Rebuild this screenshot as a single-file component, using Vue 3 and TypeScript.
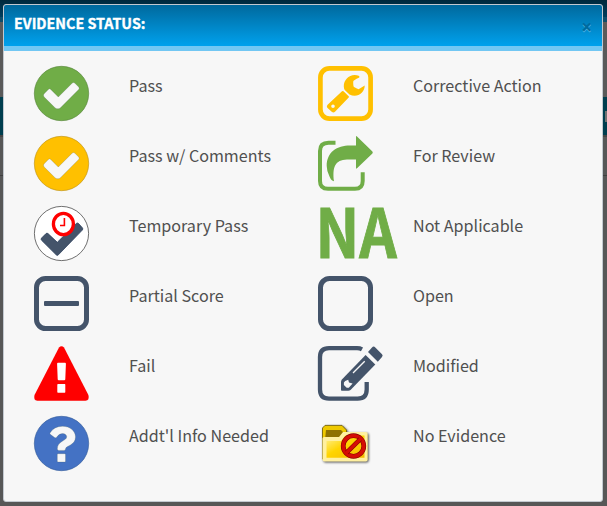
<script setup lang="ts">
interface StatusItem {
  icon: string
  label: string
}

const statuses: StatusItem[] = [
  { icon: 'pass', label: 'Pass' },
  { icon: 'wrench', label: 'Corrective Action' },
  { icon: 'comments', label: 'Pass w/ Comments' },
  { icon: 'review', label: 'For Review' },
  { icon: 'temporary', label: 'Temporary Pass' },
  { icon: 'na', label: 'Not Applicable' },
  { icon: 'partial', label: 'Partial Score' },
  { icon: 'open', label: 'Open' },
  { icon: 'fail', label: 'Fail' },
  { icon: 'modified', label: 'Modified' },
  { icon: 'info', label: "Addt'l Info Needed" },
  { icon: 'none', label: 'No Evidence' },
]
</script>

<template>
  <div class="screen">
    <div class="page">
      <div class="page-top"></div>
      <div class="page-edge"></div>
      <div class="page-space"></div>
      <div class="page-band"><span class="page-field"></span></div>
      <div class="page-row"></div>
    </div>
    <section class="dialog">
      <header class="head">
        <h1>EVIDENCE STATUS:</h1>
        <button class="close" type="button">×</button>
      </header>
      <div class="grid">
        <div v-for="item in statuses" :key="item.icon" class="item">
          <svg class="icon" viewBox="0 0 55 55">
            <g v-if="item.icon === 'pass' || item.icon === 'comments'">
              <circle cx="27.5" cy="27.5" r="27.2" :class="item.icon" />
              <path class="check" d="M10.2 27.7L14.6 23.2Q15.5 22.3 16.5 23.2L24.3 31L38.3 17Q39.5 15.9 40.7 17L44.7 21Q45.8 22.2 44.7 23.4L26.5 41.7Q25.5 42.7 24.3 42.7H23Q22 42.7 21 41.7L10.2 31Q9.5 30.2 9.5 29.3Q9.5 28.4 10.2 27.7Z" />
            </g>
            <g v-else-if="item.icon === 'temporary'">
              <circle cx="27.5" cy="27.5" r="27.1" fill="#fff" stroke="#333" stroke-width=".7" />
              <path d="M7.6 32L12 27.6Q13 26.7 14 27.6L23.3 36.3L42.3 17.5Q43.5 16.5 44.6 17.6L48.3 21.7Q49.4 23 48.3 24.1L24.4 48.8Q23.3 50 22.2 48.8L7.6 34.3Q6.5 33.1 7.6 32Z" fill="#44546a" stroke="#2b3f5c" stroke-width=".8" />
              <ellipse cx="29.4" cy="18" rx="10" ry="10.6" fill="#fff" stroke="red" stroke-width="3.3" />
              <path d="M30.4 12V19.5H26" fill="none" stroke="red" stroke-width="1.6" />
            </g>
            <g v-else-if="item.icon === 'partial' || item.icon === 'open'">
              <rect x="2.5" y="2.5" width="50" height="50" rx="9" class="slate-line" />
              <rect v-if="item.icon === 'partial'" x="10" y="25" width="35" height="5" rx="1" fill="#44546a" />
            </g>
            <g v-else-if="item.icon === 'fail'">
              <path d="M25 1.5Q27.5-1.2 30 1.5L54.4 49Q55.8 54.6 51.5 54.8H3.3Q-.8 54.4 .5 49Z" fill="red" />
              <path d="M24 16.8H31Q32 16.8 31.9 18L31.3 33.2Q31.3 34.3 30.2 34.3H24.8Q23.7 34.3 23.7 33.2L23.1 18Q23 16.8 24 16.8ZM24 38H30.7Q31.3 38 31.3 38.7V46Q31.3 46.8 30.7 46.8H24Q23.3 46.8 23.3 46V38.7Q23.3 38 24 38Z" fill="#fff" />
            </g>
            <g v-else-if="item.icon === 'info'">
              <circle cx="27.5" cy="27.5" r="27.2" fill="#4472c4" stroke="#315997" stroke-width=".6" />
              <path class="check" d="M16 17Q20 10.3 28.5 10.3C36 10.3 41.5 15 41.5 21C41.5 29.5 31.5 29.5 31.5 33Q31.5 34.4 30.2 34.4H24.7Q23.3 34.4 23.3 33C23.3 25 32.7 25 32.7 20.8C32.7 17.4 26.5 15.5 22.6 21.3Q21.7 22.3 20.6 21.5L16.3 18.3Q15.6 17.7 16 17ZM24 37.7H30.8Q31.5 37.7 31.5 38.4V45.3Q31.5 46 30.8 46H24Q23.3 46 23.3 45.3V38.4Q23.3 37.7 24 37.7Z" />
            </g>
            <g v-else-if="item.icon === 'wrench'">
              <rect x="2.4" y="2.4" width="50.2" height="50.2" rx="9" fill="none" stroke="#ffc000" stroke-width="4.7" />
              <path d="M41.3 10C33 6.6 25.6 13 25.8 20.5Q25.8 22.8 27 24.2L31.5 28.5C39 32.2 46.7 27.2 46.7 19.5L41 23.1Q40 23.5 36 21Q35.2 20.4 35.2 15.7Q35.2 14.3 41.3 11.6ZM25.5 25.3L30.7 30.2Q31.2 31 30.7 31.6L17 45.7Q15.6 47 14 46L9.3 41.7Q8.2 40 9.6 38.7L24 25.3Q24.8 24.7 25.5 25.3ZM15 38.5A1.8 1.8 0 1 0 15 42.1A1.8 1.8 0 1 0 15 38.5Z" fill="#ffc000" fill-rule="evenodd" />
            </g>
            <g v-else-if="item.icon === 'review'">
              <path d="M17.5 6.8H10.5Q2 6.8 2 15V45Q2 52.8 10 52.8H37Q44.7 52.8 44.7 45V36.3" fill="none" stroke="#70ad47" stroke-width="4" />
              <path d="M38 .8Q38-.4 39 .5L54.4 15.6Q55.2 16.5 54.4 17.4L39 32.3Q38 33.2 38 32V23.4H29C17 23.8 14.3 31 16 45.3Q13.4 45.2 11.5 40.6Q8.7 35 8.7 30C8.7 16 19 9.5 32 9.5H38Z" fill="#70ad47" />
            </g>
            <g v-else-if="item.icon === 'na'">
              <text class="na-text" x="-2.6" y="51.6" textLength="81.4" lengthAdjust="spacingAndGlyphs">NA</text>
            </g>
            <g v-else-if="item.icon === 'modified'">
              <path d="M44 3.3Q42 2.2 39 2.2H11Q2 2.2 2 11V43.6Q2 52.7 11 52.7H39.7Q48.7 52.7 48.7 43.6V36" fill="none" stroke="#44546a" stroke-width="4.3" />
              <path d="M47.6 9L57.3 18.4L32.5 44Q31.6 44.7 30.3 44.7H23.8Q23 44.7 23 43.9V35.8Q23 34.5 23.9 33.4Z" fill="#44546a" />
              <path d="M50 6L54 1.4Q55.6-.4 57.3 1.4L64 8.3Q65.3 9.6 64 11L59.8 15.8Z" fill="#44546a" />
              <path d="M27.2 35L30.2 33.7L31 36.4L34.6 37.4L30.8 41.7H28.7L25.9 39V36.5Z" fill="#f7f7f7" />
              <path d="M35 27L46.7 15.2" stroke="#f7f7f7" stroke-width="1.3" />
            </g>
            <g v-else>
              <defs>
                <linearGradient id="folderFront" x1="0" y1="0" x2="1" y2="1">
                  <stop offset="0" stop-color="#fff29a" />
                  <stop offset=".45" stop-color="#ffd500" />
                  <stop offset="1" stop-color="#f5b800" />
                </linearGradient>
              </defs>
              <g class="folder">
                <path d="M4.5 43V12L7 9.4H24L28.5 14V18H49V43Z" fill="#efc900" stroke="#6b5900" stroke-width=".8" />
                <path d="M8 14H23L27 18V24H7Z" fill="#8f7200" />
                <path d="M4.5 22.5Q4.5 21 6 21H21L25 16H48Q49.7 16 49.7 17.7V43.5Q49.7 45.5 47.7 45.5H6.5Q4.5 45.5 4.5 43.5Z" fill="#fff0a0" />
                <path d="M8.5 25H23L27 19.5H46.5V41.8H8.5Z" fill="url(#folderFront)" />
              </g>
              <g transform="translate(0 -3)">
                <circle cx="35.5" cy="33" r="10.3" fill="none" stroke="#850000" stroke-width="4.7" />
                <circle cx="35.5" cy="33" r="10.3" fill="none" stroke="#d50d05" stroke-width="3.6" />
                <path d="M28.6 39.7L42.3 26.1" stroke="#850000" stroke-width="4.5" />
                <path d="M28 40.3L42.9 25.5" stroke="#d50d05" stroke-width="3.4" />
              </g>
            </g>
          </svg>
          <span class="label">{{ item.label }}</span>
        </div>
      </div>
    </section>
  </div>
</template>

<style>
body {
  margin: 0;
}
</style>

<style scoped>
.screen {
  position: relative;
  box-sizing: border-box;
  width: 607px;
  height: 506px;
  padding: 4px 4px 4px 3px;
  overflow: hidden;
  font-family: "Noto Sans CJK SC", "Open Sans", sans-serif;
}
.page {
  position: absolute;
  inset: 0;
  display: flex;
  flex-direction: column;
  background: #575757;
}
.page-top {
  height: 17px;
  background: linear-gradient(#00293d, #003d5c);
}
.page-edge {
  height: 5px;
  background: #0d4d6b;
}
.page-space {
  height: 75px;
  background: #5a5a5a;
}
.page-band {
  display: flex;
  justify-content: flex-end;
  align-items: center;
  height: 38px;
  background: #003e4f;
  border-bottom: 2px solid #454545;
}
.page-field {
  width: 2px;
  height: 11px;
  background: #727272;
}
.page-row {
  height: 38px;
  border-bottom: 1px solid #404040;
}
.dialog {
  position: relative;
  box-sizing: border-box;
  width: 600px;
  height: 498px;
  border: 1px solid #c3c9d0;
  border-radius: 3px;
  background: #f7f7f7;
  overflow: hidden;
}
.head {
  display: flex;
  justify-content: space-between;
  align-items: flex-start;
  box-sizing: border-box;
  height: 46px;
  padding: 7px 10px 0;
  background: linear-gradient(#00699d, #00a1ed);
  border-bottom: 5px solid #72c7f3;
  background-clip: padding-box;
}
h1 {
  margin: 0;
  color: #fff;
  font-size: 14.3px;
  font-weight: 700;
  line-height: 22px;
  -webkit-text-stroke: .35px #fff;
}
.close {
  margin: 4px 0 0;
  padding: 0;
  border: 0;
  background: none;
  color: #006a9e;
  font: 700 19px/22px "Open Sans", sans-serif;
  text-shadow: 0 1px 0 #4db4e4;
}
.grid {
  display: grid;
  grid-template-columns: 284px 284px;
  grid-auto-rows: 70px;
  padding: 15px 0 0 30px;
}
.item {
  display: flex;
  gap: 40px;
}
.icon {
  flex: none;
  width: 55px;
  height: 55px;
  overflow: visible;
}
.label {
  padding-top: 6px;
  color: #505050;
  font-size: 16.13px;
  line-height: 26px;
  white-space: nowrap;
}
.pass {
  fill: #70ad47;
  stroke: #538136;
  stroke-width: .6;
}
.comments {
  fill: #ffc000;
  stroke: #b98d12;
  stroke-width: .6;
}
.check {
  fill: #f7f7f7;
  stroke: #455a4a;
  stroke-opacity: .45;
  stroke-width: .5;
}
.slate-line {
  fill: none;
  stroke: #44546a;
  stroke-width: 5;
}
.na-text {
  fill: #70ad47;
  stroke: #70ad47;
  stroke-width: .9;
  font-size: 67px;
  font-weight: 700;
}
.folder {
  filter: drop-shadow(1px 1px 1px #555);
}
</style>
